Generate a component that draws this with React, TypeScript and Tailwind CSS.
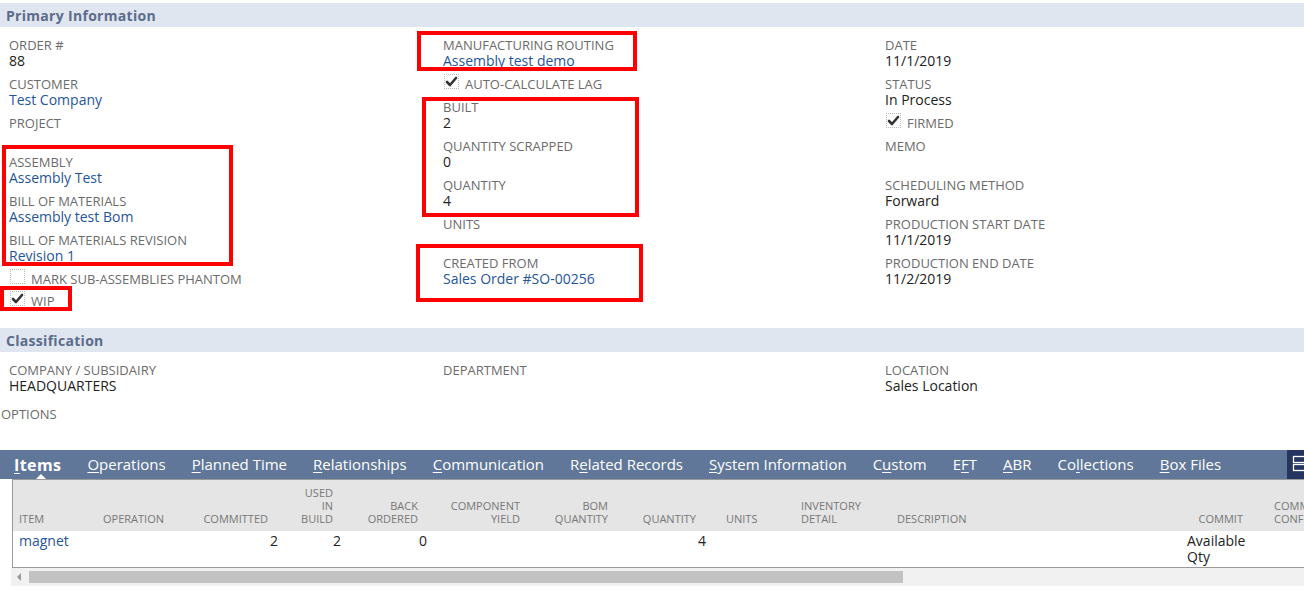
import React from "react";

const LABEL = "text-[13px] leading-[16px] text-[#6b6b6b] uppercase whitespace-nowrap";
const VALUE = "text-[14px] leading-[16px] text-[#222] h-[16px] whitespace-nowrap";
const LINK = "text-[14px] leading-[16px] text-[#255599] h-[16px] whitespace-nowrap";

function Field({ label, value, link }: { label: string; value?: string; link?: boolean }) {
  return (
    <div>
      <div className={LABEL}>{label}</div>
      <div className={link ? LINK : VALUE}>{value ?? ""}</div>
    </div>
  );
}

function Check({ label, checked }: { label: string; checked: boolean }) {
  return (
    <div className="flex items-center h-[16px] gap-[6px]">
      <div className="ml-[1px] w-[15px] h-[15px] border border-dotted border-[#b8b8b8] bg-white -translate-y-[3px] flex items-center justify-center">
        {checked && (
          <svg width="13" height="13" viewBox="0 0 13 13">
            <path d="M2 7 L5 10 L11 3" fill="none" stroke="#333" strokeWidth="2.6" strokeLinecap="round" strokeLinejoin="round" />
          </svg>
        )}
      </div>
      <div className={LABEL}>{label}</div>
    </div>
  );
}

function Band({ title }: { title: string }) {
  return (
    <div className="h-[24px] bg-[#e0e6ef] flex items-center px-[6px] text-[14px] tracking-[0.3px] font-bold text-[#5b6c8c]">
      {title}
    </div>
  );
}

type Tab = { pre: string; u: string; post: string; bold?: boolean };
const TABS: Tab[] = [
  { pre: "", u: "I", post: "tems", bold: true },
  { pre: "", u: "O", post: "perations" },
  { pre: "", u: "P", post: "lanned Time" },
  { pre: "", u: "R", post: "elationships" },
  { pre: "", u: "C", post: "ommunication" },
  { pre: "R", u: "e", post: "lated Records" },
  { pre: "", u: "S", post: "ystem Information" },
  { pre: "C", u: "u", post: "stom" },
  { pre: "E", u: "F", post: "T" },
  { pre: "", u: "A", post: "BR" },
  { pre: "Co", u: "l", post: "lections" },
  { pre: "", u: "B", post: "ox Files" },
];

type Col = {
  w: number;
  lines: string[];
  right?: boolean;
  hp: string;
  vp: string;
  vright?: boolean;
};
const COLS: Col[] = [
  { w: 84, lines: ["ITEM"], hp: "pl-[6px]", vp: "pl-[6px]" },
  { w: 88, lines: ["OPERATION"], hp: "pl-[6px]", vp: "pl-[6px]" },
  { w: 97, lines: ["COMMITTED"], right: true, hp: "pr-[14px]", vp: "pr-[4px]", vright: true },
  { w: 63, lines: ["USED", "IN", "BUILD"], right: true, hp: "pr-[12px]", vp: "pr-[4px]", vright: true },
  { w: 85, lines: ["BACK", "ORDERED"], right: true, hp: "pr-[12px]", vp: "pr-[3px]", vright: true },
  { w: 102, lines: ["COMPONENT", "YIELD"], right: true, hp: "pr-[12px]", vp: "pr-[4px]", vright: true },
  { w: 88, lines: ["BOM", "QUANTITY"], right: true, hp: "pr-[12px]", vp: "pr-[4px]", vright: true },
  { w: 88, lines: ["QUANTITY"], right: true, hp: "pr-[12px]", vp: "pr-[2px]", vright: true },
  { w: 87, lines: ["UNITS"], hp: "pl-[18px]", vp: "pl-[18px]" },
  { w: 96, lines: ["INVENTORY", "DETAIL"], hp: "pl-[6px]", vp: "pl-[6px]" },
  { w: 290, lines: ["DESCRIPTION"], hp: "pl-[6px]", vp: "pl-[6px]" },
  { w: 74, lines: ["COMMIT"], right: true, hp: "pr-[12px]", vp: "pl-[6px]" },
  { w: 120, lines: ["COMMITMENT", "CONFIRMED"], hp: "pl-[19px]", vp: "pl-[19px]" },
];

const ROW: React.ReactNode[] = [
  <span className="text-[#255599]">magnet</span>,
  "",
  "2",
  "2",
  "0",
  "",
  "",
  "4",
  "",
  "",
  "",
  <span>Available Qty</span>,
  "",
];

export default function App() {
  return (
    <div className="relative w-[1304px] h-[590px] overflow-hidden bg-white font-['Open_Sans',sans-serif]">
      <div className="pt-[3px]">
        <Band title="Primary Information" />
        <div className="grid grid-cols-[434px_442px_1fr] pl-[9px] pt-[10px]">
          <div className="flex flex-col gap-[7px]">
            <Field label="Order #" value="88" />
            <Field label="Customer" value="Test Company" link />
            <Field label="Project" />
            <Field label="Assembly" value="Assembly Test" link />
            <Field label="Bill of Materials" value="Assembly test Bom" link />
            <Field label="Bill of Materials Revision" value="Revision 1" link />
            <Check label="Mark Sub-Assemblies Phantom" checked={false} />
            <div className="-mt-[1px]">
              <Check label="WIP" checked />
            </div>
          </div>
          <div className="flex flex-col gap-[7px]">
            <Field label="Manufacturing Routing" value="Assembly test demo" link />
            <Check label="Auto-Calculate Lag" checked />
            <Field label="Built" value="2" />
            <Field label="Quantity Scrapped" value="0" />
            <Field label="Quantity" value="4" />
            <Field label="Units" />
            <Field label="Created From" value="Sales Order #SO-00256" link />
          </div>
          <div className="flex flex-col gap-[7px]">
            <Field label="Date" value="11/1/2019" />
            <Field label="Status" value="In Process" />
            <Check label="Firmed" checked />
            <Field label="Memo" />
            <Field label="Scheduling Method" value="Forward" />
            <Field label="Production Start Date" value="11/1/2019" />
            <Field label="Production End Date" value="11/2/2019" />
          </div>
        </div>

        <div className="mt-[19px]">
          <Band title="Classification" />
        </div>
        <div className="grid grid-cols-[434px_442px_1fr] pl-[9px] pt-[10px]">
          <Field label="Company / Subsidairy" value="HEADQUARTERS" />
          <Field label="Department" />
          <Field label="Location" value="Sales Location" />
        </div>
        <div className={`${LABEL} pl-[1px] mt-[12px]`}>Options</div>

        {/* Tab bar */}
        <div className="mt-[28px] h-[29px] bg-[#607799] flex items-stretch pl-[1px]">
          {TABS.map((t, i) => (
            <div
              key={i}
              className={`relative flex items-center px-[13px] text-[15px] text-white whitespace-nowrap ${t.bold ? "font-bold text-[16px] tracking-[0.4px]" : ""}`}
            >
              {t.pre}
              <span className="underline underline-offset-[2px]">{t.u}</span>
              {t.post}
              {i === 0 && (
                <div className="absolute bottom-0 left-[35px] w-0 h-0 border-l-[5px] border-r-[5px] border-b-[5px] border-l-transparent border-r-transparent border-b-white" />
              )}
            </div>
          ))}
          <div className="flex-1" />
          <div className="w-[17px] shrink-0 bg-[#26355f] overflow-hidden">
            <svg width="17" height="29" viewBox="0 0 17 29">
              <rect x="6.5" y="6.5" width="14" height="6" fill="none" stroke="#fff" strokeWidth="1.3" />
              <rect x="6.5" y="14.5" width="14" height="6" fill="none" stroke="#fff" strokeWidth="1.3" />
            </svg>
          </div>
        </div>

        {/* Table */}
        <div className="ml-[12px] border-t border-l border-b border-[#9a9a9a] w-[1400px]">
          <div className="flex h-[51px] bg-[#e5e5e5]">
            {COLS.map((c, i) => (
              <div
                key={i}
                style={{ width: c.w }}
                className={`shrink-0 flex flex-col justify-end pb-[6px] text-[11px] leading-[13px] text-[#777] whitespace-nowrap ${c.right ? "items-end text-right" : "items-start"} ${c.hp}`}
              >
                {c.lines.map((l, j) => (
                  <div key={j}>{l}</div>
                ))}
              </div>
            ))}
          </div>
          <div className="flex h-[36px] bg-white">
            {COLS.map((c, i) => (
              <div
                key={i}
                style={{ width: c.w }}
                className={`shrink-0 pt-[2px] text-[14px] leading-[16px] text-[#222] ${c.vright ? "text-right" : "text-left"} ${c.vp}`}
              >
                {ROW[i]}
              </div>
            ))}
          </div>
        </div>

        {/* Scrollbar */}
        <div className="ml-[11px] h-[18px] bg-[#f1f1f1] flex items-center">
          <div className="w-[18px] flex items-center justify-center">
            <div className="w-0 h-0 border-t-[4px] border-b-[4px] border-r-[4px] border-t-transparent border-b-transparent border-r-[#9a9a9a] ml-[-2px]" />
          </div>
          <div className="w-[874px] h-[12px] bg-[#c2c2c2]" />
        </div>
      </div>

      {/* Annotation overlays */}
      <div className="absolute left-[2px] top-[145px] w-[231px] h-[121px] border-[4px] border-[#ff0000]" />
      <div className="absolute left-[0px] top-[286px] w-[72px] h-[25px] border-[4px] border-[#ff0000]" />
      <div className="absolute left-[417px] top-[31px] w-[220px] h-[40px] border-[4px] border-[#ff0000]" />
      <div className="absolute left-[422px] top-[97px] w-[217px] h-[120px] border-[4px] border-[#ff0000]" />
      <div className="absolute left-[416px] top-[244px] w-[227px] h-[58px] border-[4px] border-[#ff0000]" />
    </div>
  );
}
